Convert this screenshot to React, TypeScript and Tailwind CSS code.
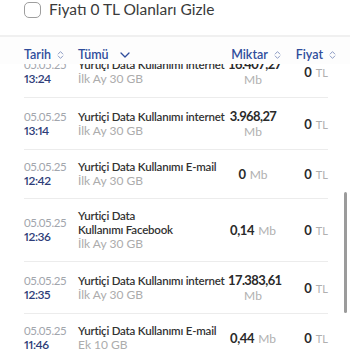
const rows = [
  { date: '05.05.25', time: '13:24', title: 'Yurtiçi Data Kullanımı internet', sub: 'İlk Ay 30 GB', amount: '16.407,27', wrap: true },
  { date: '05.05.25', time: '13:14', title: 'Yurtiçi Data Kullanımı internet', sub: 'İlk Ay 30 GB', amount: '3.968,27', wrap: true },
  { date: '05.05.25', time: '12:42', title: 'Yurtiçi Data Kullanımı E-mail', sub: 'İlk Ay 30 GB', amount: '0', wrap: false },
  { date: '05.05.25', time: '12:36', title: 'Yurtiçi Data Kullanımı Facebook', sub: 'İlk Ay 30 GB', amount: '0,14', wrap: false, narrow: true },
  { date: '05.05.25', time: '12:35', title: 'Yurtiçi Data Kullanımı internet', sub: 'İlk Ay 30 GB', amount: '17.383,61', wrap: true },
  { date: '05.05.25', time: '11:46', title: 'Yurtiçi Data Kullanımı E-mail', sub: 'Ek 10 GB', amount: '0,44', wrap: false },
]

function SortIcon() {
  return (
    <svg width="7" height="10" viewBox="0 0 7 10" fill="none" className="ml-[6px]">
      <path d="M1.2 4 L3.5 1.6 L5.8 4" stroke="#8d9cc4" strokeWidth="1" strokeLinecap="round" strokeLinejoin="round" />
      <path d="M1.2 6 L3.5 8.4 L5.8 6" stroke="#8d9cc4" strokeWidth="1" strokeLinecap="round" strokeLinejoin="round" />
    </svg>
  )
}

export default function App() {
  return (
    <div className="relative w-[350px] h-[350px] overflow-hidden bg-white font-['Lato',sans-serif] flex flex-col">
      {/* Filter */}
      <div className="h-[35px] shrink-0 pl-6 pt-[1px]">
        <label className="flex items-center h-[17px] gap-[8px]">
          <span className="w-[17px] h-[16px] rounded-[5px] border-[1.5px] border-[#9e9e9e] bg-white" />
          <span className="text-[15.5px] text-[#3a3a3a] leading-none">Fiyatı 0 TL Olanları Gizle</span>
        </label>
      </div>
      <div className="h-[2px] shrink-0 bg-[#f0f0f0]" />

      {/* Header */}
      <div className="h-[27px] shrink-0 pl-6 pr-[14px] pt-[8px] grid grid-cols-[54px_150px_54px_1fr] text-[12.5px] font-semibold text-[#2f4d9c] leading-[16px] bg-[#fdfdfd]">
        <div className="flex items-center">
          Tarih
          <SortIcon />
        </div>
        <div className="flex items-center">
          Tümü
          <svg width="10" height="6" viewBox="0 0 10 6" fill="none" className="ml-[11px]">
            <path d="M1 1 L5 5 L9 1" stroke="#2f4d9c" strokeWidth="1.3" strokeLinecap="round" strokeLinejoin="round" />
          </svg>
        </div>
        <div className="flex items-center justify-center pl-[2px]">
          Miktar
          <SortIcon />
        </div>
        <div className="flex items-center justify-end">
          Fiyat
          <SortIcon />
        </div>
      </div>

      {/* Rows */}
      <div className="flex-1 overflow-hidden">
        <div className="-mt-[18px] pl-6 pr-[22px]">
          {rows.map((r, i) => (
            <div
              key={i}
              className="grid grid-cols-[54px_150px_50px_1fr] items-center py-[10px] border-b border-[#ececec]"
            >
              <div className="flex flex-col leading-[14px] tracking-[-0.4px]">
                <span className="text-[11.5px] text-[#a2a6ad]">{r.date}</span>
                <span className="text-[12px] font-semibold text-[#2d3c78] proportional-nums">{r.time}</span>
              </div>
              <div className="flex flex-col leading-[14px]">
                <span className={`text-[11.5px] font-semibold text-[#333] tracking-[-0.2px] ${r.narrow ? 'max-w-[104px]' : ''}`}>{r.title}</span>
                <span className="text-[12px] text-[#acacac]">{r.sub}</span>
              </div>
              <div className="text-center">
                {r.wrap ? (
                  <div className="flex flex-col">
                    <span className="text-[13px] font-bold text-[#2a2a2a] leading-[16px] tracking-[-0.6px]">{r.amount}</span>
                    <span className="text-[12px] text-[#b0b0b0] leading-[15px]">Mb</span>
                  </div>
                ) : (
                  <div className="leading-[16px] whitespace-nowrap">
                    <span className="text-[13px] font-bold text-[#2a2a2a] tracking-[-0.4px]">{r.amount}</span>{' '}
                    <span className="text-[12px] text-[#b0b0b0]">Mb</span>
                  </div>
                )}
              </div>
              <div className="text-right leading-[16px] whitespace-nowrap">
                <span className="text-[13px] font-bold text-[#2a2a2a]">0</span>{' '}
                <span className="text-[11px] text-[#b0b0b0]">TL</span>
              </div>
            </div>
          ))}
        </div>
      </div>

      {/* Scrollbar */}
      <div className="absolute left-[344px] top-[192px] w-[3px] h-[121px] rounded-full bg-[#9b9b9b]" />
    </div>
  )
}
